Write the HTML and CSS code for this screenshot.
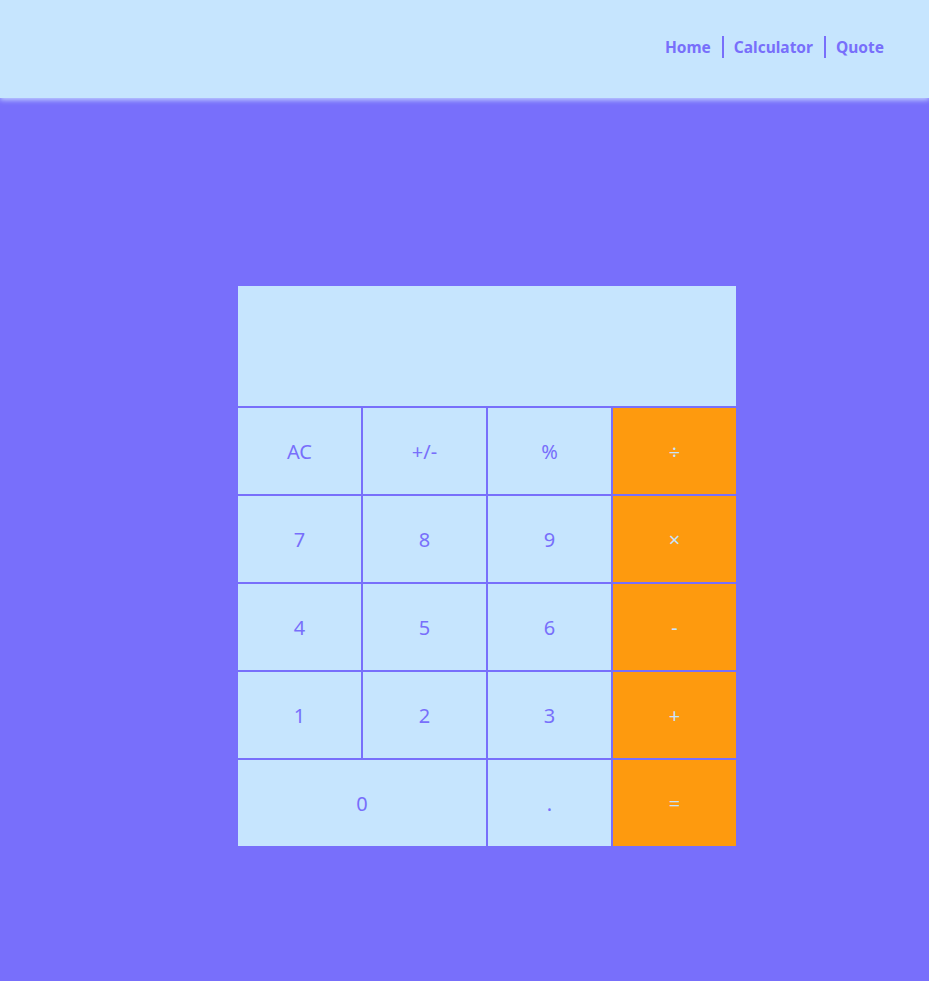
FILE: index.html
```html
<!DOCTYPE html>
<html lang="en">
<head>
<meta charset="utf-8">
<title>Calculator</title>
<link rel="stylesheet" href="styles.css">
</head>
<body>
<header class="header">
  <nav class="nav">
    <a class="nav-link" href="#">Home</a>
    <a class="nav-link sep" href="#">Calculator</a>
    <a class="nav-link sep" href="#">Quote</a>
  </nav>
</header>
<main class="main">
  <div class="calc">
    <div class="display"></div>
    <div class="keys">
      <button class="key">AC</button>
      <button class="key">+/-</button>
      <button class="key">%</button>
      <button class="key op">÷</button>
      <button class="key">7</button>
      <button class="key">8</button>
      <button class="key">9</button>
      <button class="key op">×</button>
      <button class="key">4</button>
      <button class="key">5</button>
      <button class="key">6</button>
      <button class="key op">-</button>
      <button class="key">1</button>
      <button class="key">2</button>
      <button class="key">3</button>
      <button class="key op">+</button>
      <button class="key zero">0</button>
      <button class="key">.</button>
      <button class="key op">=</button>
    </div>
  </div>
</main>
</body>
</html>
```
FILE: styles.css
```css
* { box-sizing: border-box; }
html, body {
  margin: 0;
  padding: 0;
  background: #786ffb;
  font-family: "Noto Sans", "Open Sans", sans-serif;
}
body { min-height: 981px; }
.header {
  height: 98px;
  background: #c6e5fe;
  box-shadow: 0 2px 5px rgba(200, 220, 255, 0.9);
  display: flex;
  justify-content: flex-end;
  align-items: flex-start;
  padding: 36px 34px 0 0;
  position: relative;
}
.nav { display: flex; align-items: center; }
.nav-link {
  color: #786ffb;
  font-weight: bold;
  font-size: 15.5px;
  text-decoration: none;
  line-height: 22px;
  padding: 0 11px 0 10px;
}
.nav-link.sep { border-left: 2px solid #786ffb; }
.main {
  padding: 187px 0 0 237px;
}
.calc {
  width: 500px;
}
.display {
  height: 122px;
  background: #c6e5fe;
  border: 1px solid #786ffb;
}
.keys {
  display: grid;
  grid-template-columns: repeat(4, 125px);
  grid-auto-rows: 88px;
}
.key {
  border: 1px solid #786ffb;
  background: #c6e5fe;
  color: #786ffb;
  font-family: "Noto Sans", "Open Sans", sans-serif;
  font-size: 20px;
  padding: 0;
  margin: 0;
}
.key.op {
  background: #fe9a0e;
  color: #c6e5fe;
}
.key.zero { grid-column: span 2; }
```
